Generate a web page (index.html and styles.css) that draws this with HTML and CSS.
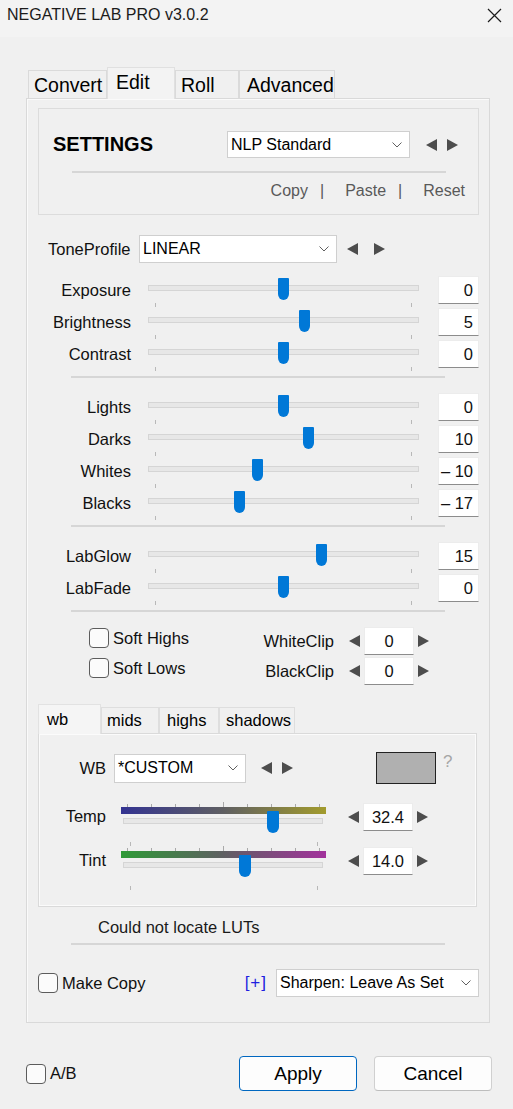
FILE: index.html
```html
<!DOCTYPE html>
<html lang="en">
<head>
<meta charset="utf-8">
<title>Negative Lab Pro</title>
<link rel="stylesheet" href="styles.css">
</head>
<body>
<div class="window">
  <header class="titlebar">
    <span class="title">NEGATIVE LAB PRO v3.0.2</span>
    <svg class="close" width="15" height="15" viewBox="0 0 15 15"><path d="M1 1 L14 14 M14 1 L1 14" stroke="#1b1b1b" stroke-width="1.2" fill="none"/></svg>
  </header>

  <nav class="tabs">
    <span class="tab tab-convert">Convert</span>
    <span class="tab tab-edit active">Edit</span>
    <span class="tab tab-roll">Roll</span>
    <span class="tab tab-adv">Advanced</span>
  </nav>

  <section class="pane">
    <div class="settings">
      <div class="settings-head">
        <h1 class="settings-title">SETTINGS</h1>
        <div class="select select-preset"><span class="select-text">NLP Standard</span><svg class="chev" width="10" height="6" viewBox="0 0 10 6"><path d="M0.5 0.5 L5 5 L9.5 0.5" fill="none" stroke="#606060" stroke-width="1"/></svg></div>
        <i class="arr-l preset-prev"></i><i class="arr-r preset-next"></i>
      </div>
      <hr class="sep sep-settings">
      <div class="links"><span>Copy</span><span class="bar">|</span><span>Paste</span><span class="bar">|</span><span>Reset</span></div>
    </div>

    <div class="tone-row">
      <span class="tone-label">ToneProfile</span>
      <div class="select select-tone"><span class="select-text">LINEAR</span><svg class="chev" width="10" height="6" viewBox="0 0 10 6"><path d="M0.5 0.5 L5 5 L9.5 0.5" fill="none" stroke="#606060" stroke-width="1"/></svg></div>
      <i class="arr-l tone-prev"></i><i class="arr-r tone-next"></i>
    </div>

    <div class="sgroup sgroup-first">
      <div class="srow"><span class="slabel">Exposure</span><div class="slider"><div class="rail"></div><span class="thumb" style="left:130px"></span></div><span class="vbox">0</span></div>
      <div class="srow"><span class="slabel">Brightness</span><div class="slider"><div class="rail"></div><span class="thumb" style="left:151px"></span></div><span class="vbox">5</span></div>
      <div class="srow"><span class="slabel">Contrast</span><div class="slider"><div class="rail"></div><span class="thumb" style="left:130px"></span></div><span class="vbox">0</span></div>
    </div>
    <hr class="sep sep-group">

    <div class="sgroup">
      <div class="srow"><span class="slabel">Lights</span><div class="slider"><div class="rail"></div><span class="thumb" style="left:130px"></span></div><span class="vbox">0</span></div>
      <div class="srow"><span class="slabel">Darks</span><div class="slider"><div class="rail"></div><span class="thumb" style="left:155px"></span></div><span class="vbox">10</span></div>
      <div class="srow"><span class="slabel">Whites</span><div class="slider"><div class="rail"></div><span class="thumb" style="left:104px"></span></div><span class="vbox">– 10</span></div>
      <div class="srow"><span class="slabel">Blacks</span><div class="slider"><div class="rail"></div><span class="thumb" style="left:86px"></span></div><span class="vbox">– 17</span></div>
    </div>
    <hr class="sep sep-group">

    <div class="sgroup">
      <div class="srow"><span class="slabel">LabGlow</span><div class="slider"><div class="rail"></div><span class="thumb" style="left:168px"></span></div><span class="vbox">15</span></div>
      <div class="srow"><span class="slabel">LabFade</span><div class="slider"><div class="rail"></div><span class="thumb" style="left:130px"></span></div><span class="vbox">0</span></div>
    </div>
    <hr class="sep sep-group">

    <div class="clips">
      <div class="checks">
        <label class="check"><span class="cb"></span><span class="check-text">Soft Highs</span></label>
        <label class="check"><span class="cb"></span><span class="check-text">Soft Lows</span></label>
      </div>
      <div class="steppers">
        <div class="stepper"><span class="step-label">WhiteClip</span><i class="arr-l step-prev"></i><span class="nbox">0</span><i class="arr-r step-next"></i></div>
        <div class="stepper"><span class="step-label">BlackClip</span><i class="arr-l step-prev"></i><span class="nbox">0</span><i class="arr-r step-next"></i></div>
      </div>
    </div>

    <nav class="subtabs">
      <span class="subtab subtab-wb active">wb</span>
      <span class="subtab subtab-mids">mids</span>
      <span class="subtab subtab-highs">highs</span>
      <span class="subtab subtab-shadows">shadows</span>
    </nav>
    <div class="subpane">
      <div class="wb-row">
        <span class="wb-label">WB</span>
        <div class="select select-wb"><span class="select-text">*CUSTOM</span><svg class="chev" width="10" height="6" viewBox="0 0 10 6"><path d="M0.5 0.5 L5 5 L9.5 0.5" fill="none" stroke="#606060" stroke-width="1"/></svg></div>
        <i class="arr-l wb-prev"></i><i class="arr-r wb-next"></i>
        <span class="swatch"></span>
        <span class="help">?</span>
      </div>

      <div class="crow crow-first">
        <span class="clabel">Temp</span>
        <div class="cslider">
          <div class="cticks"><i></i><i></i><i></i><i></i><i></i><i></i><i></i><i></i><i></i></div>
          <div class="grad grad-temp"></div>
          <div class="crail"></div>
          <span class="thumb cthumb" style="left:146px"></span>
        </div>
        <div class="stepper wb-stepper"><i class="arr-l"></i><span class="nbox">32.4</span><i class="arr-r step-next"></i></div>
      </div>

      <div class="crow">
        <span class="clabel">Tint</span>
        <div class="cslider">
          <div class="cticks"><i></i><i></i><i></i><i></i><i></i><i></i><i></i><i></i><i></i></div>
          <div class="grad grad-tint"></div>
          <div class="crail"></div>
          <span class="thumb cthumb" style="left:118px"></span>
        </div>
        <div class="stepper wb-stepper"><i class="arr-l"></i><span class="nbox">14.0</span><i class="arr-r step-next"></i></div>
      </div>
    </div>

    <p class="lut">Could not locate LUTs</p>
    <hr class="sep sep-lut">

    <div class="copy-row">
      <label class="check"><span class="cb"></span><span class="check-text">Make Copy</span></label>
      <span class="plus">[+]</span>
      <div class="select select-sharpen"><span class="select-text">Sharpen: Leave As Set</span><svg class="chev" width="10" height="6" viewBox="0 0 10 6"><path d="M0.5 0.5 L5 5 L9.5 0.5" fill="none" stroke="#606060" stroke-width="1"/></svg></div>
    </div>
  </section>

  <footer class="footer">
    <label class="check"><span class="cb"></span><span class="check-text">A/B</span></label>
    <button class="btn btn-primary">Apply</button>
    <button class="btn btn-cancel">Cancel</button>
  </footer>
</div>
</body>
</html>
```

FILE: styles.css
```css
* { box-sizing: border-box; }
html, body { margin: 0; padding: 0; }
body {
  background: #f0f0f0;
  font-family: "Liberation Sans", Arial, sans-serif;
  color: #111;
}
.window {
  width: 513px;
  height: 1109px;
  overflow: hidden;
  background: #f0f0f0;
}

/* title bar */
.titlebar {
  height: 37px;
  background: #f3f3f3;
  display: flex;
  align-items: center;
  padding: 0 11px 7px 7px;
}
.title { font-size: 16px; line-height: 20px; color: #1b1b1b; }
.close { margin-left: auto; display: block; }

/* main tabs */
.tabs {
  display: flex;
  align-items: flex-end;
  height: 31px;
  margin-top: 30px;
  padding-left: 28px;
}
.tab {
  height: 28px;
  border: 1px solid #dadada;
  border-bottom: none;
  background: #f0f0f0;
  font-size: 19.5px;
  line-height: 26px;
  padding-top: 1px;
  color: #000;
  white-space: nowrap;
}
.tab-convert { width: 79px; padding-left: 5px; }
.tab-edit { width: 68px; padding-left: 8px; }
.tab-roll { width: 64px; padding-left: 5px; }
.tab-adv { width: 96px; padding-left: 7px; }
.tab.active {
  height: 32px;
  margin-bottom: -1px;
  position: relative;
  z-index: 2;
  background: #f3f3f3;
  border-color: #e0e0e0;
}

/* pane */
.pane {
  margin-left: 26px;
  width: 464px;
  height: 925px;
  border: 1px solid #d9d9d9;
  box-shadow: inset 1px 1px 0 #fafafa;
}

.sep {
  border: 0;
  height: 2px;
  width: 374px;
  background: #d6d6d6;
  margin: 0 auto;
}

/* settings box */
.settings {
  width: 441px;
  height: 107px;
  margin: 9px 0 0 11px;
  border: 1px solid #dcdcdc;
}
.settings-head {
  display: flex;
  align-items: center;
  height: 27px;
  margin-top: 22px;
  padding-left: 14px;
}
.settings-title {
  margin: 0;
  width: 174px;
  font-size: 20px;
  font-weight: bold;
  line-height: 27px;
  color: #000;
}
.sep-settings { margin-top: 13px; }
.links {
  margin-top: 8px;
  line-height: 20px;
  font-size: 16px;
  color: #595959;
  text-align: right;
  padding-right: 13px;
}
.links .bar { margin: 0 21px 0 12px; }

/* select */
.select {
  display: flex;
  align-items: center;
  background: #fff;
  border: 1px solid #cfcfcf;
  padding-left: 3px;
  font-size: 16px;
  color: #000;
}
.select-text { flex: 1; white-space: nowrap; }
.chev { display: block; margin-right: 7px; flex: none; }
.select-preset { width: 183px; height: 27px; }
.select-tone { width: 198px; height: 28px; margin-left: 6px; }
.select-wb { width: 132px; height: 29px; margin-left: 8px; }
.select-sharpen { width: 203px; height: 28px; margin-left: 9px; }

/* arrows */
.arr-l, .arr-r {
  display: block;
  width: 0;
  height: 0;
  border-style: solid;
  flex: none;
}
.arr-l {
  border-width: 6px 11px 6px 0;
  border-color: transparent #4d4d4d transparent transparent;
}
.arr-r {
  border-width: 6px 0 6px 11px;
  border-color: transparent transparent transparent #4d4d4d;
}
.preset-prev { margin-left: 16px; }
.preset-next { margin-left: 10px; }
.tone-prev { margin-left: 10px; }
.tone-next { margin-left: 16px; }
.wb-prev { margin-left: 15px; }
.wb-next { margin-left: 10px; }

/* tone profile */
.tone-row {
  display: flex;
  align-items: center;
  height: 28px;
  margin-top: 20px;
  padding-left: 21px;
}
.tone-label { width: 85px; font-size: 16.5px; white-space: nowrap; }

/* sliders */
.sgroup { margin-top: 13px; }
.sgroup-first { margin-top: 11px; }
.srow {
  display: grid;
  grid-template-columns: 104px 271px 43px;
  column-gap: 17px;
  height: 32px;
  align-items: center;
}
.slabel {
  text-align: right;
  font-size: 16.5px;
  line-height: 32px;
  color: #111;
}
.slider { position: relative; height: 32px; }
.rail {
  margin-top: 11px;
  height: 6px;
  background: #e7e7e7;
  border: 1px solid #d5d5d5;
}
.slider::before, .slider::after {
  content: "";
  position: absolute;
  top: 29px;
  width: 1px;
  height: 4px;
  background: #b8b8b8;
}
.slider::before { left: 7px; }
.slider::after { right: 7px; }
.thumb {
  position: absolute;
  top: 4px;
  width: 11px;
  height: 22px;
  background: #0078d7;
  border-radius: 1px 1px 50% 50% / 1px 1px 6px 6px;
}
.vbox {
  margin-left: 2px;
  height: 28px;
  background: #fff;
  border: 1px solid #ececec;
  border-bottom-color: #8c8c8c;
  font-size: 16.5px;
  line-height: 26px;
  text-align: right;
  padding-right: 5px;
  white-space: nowrap;
}
.sep-group { margin-top: 6px; }

/* clip + checkboxes */
.clips {
  display: flex;
  margin-top: 15px;
  padding-left: 62px;
}
.checks {
  width: 135px;
  display: flex;
  flex-direction: column;
  gap: 10px;
  padding-top: 1px;
}
.check {
  display: flex;
  align-items: center;
  height: 20px;
  font-size: 16.5px;
  color: #111;
}
.cb {
  width: 20px;
  height: 20px;
  border: 1px solid #5c5c5c;
  border-radius: 4px;
  background: #fbfbfb;
  flex: none;
}
.check-text { margin-left: 4px; white-space: nowrap; }
.steppers { display: flex; flex-direction: column; gap: 2px; }
.stepper { display: flex; align-items: center; height: 28px; }
.step-label { width: 110px; text-align: right; font-size: 16.5px; }
.step-prev { margin-left: 15px; }
.nbox {
  margin-left: 4px;
  width: 50px;
  height: 28px;
  background: #fff;
  border: 1px solid #ececec;
  border-bottom-color: #8c8c8c;
  font-size: 16.5px;
  line-height: 26px;
  text-align: center;
}
.step-next { margin-left: 4px; }

/* sub tabs */
.subtabs {
  display: flex;
  align-items: flex-end;
  height: 29px;
  margin: 19px 0 0 11px;
}
.subtab {
  height: 26px;
  border: 1px solid #dedede;
  border-bottom: none;
  font-size: 16.5px;
  line-height: 25px;
  color: #000;
  background: #f0f0f0;
}
.subtab-wb { width: 63px; padding-left: 8px; }
.subtab-mids { width: 58px; padding-left: 5px; }
.subtab-highs { width: 60px; padding-left: 7px; }
.subtab-shadows { width: 76px; padding-left: 6px; }
.subtab.active {
  height: 30px;
  margin-bottom: -1px;
  line-height: 28px;
  position: relative;
  z-index: 2;
  background: #f5f5f5;
  border-color: #e2e2e2;
}
.subpane {
  margin-left: 11px;
  width: 439px;
  height: 174px;
  border: 1px solid #dadada;
  box-shadow: inset 1px 1px 0 #fbfbfb, inset -1px -1px 0 #fbfbfb;
}
.wb-row {
  display: flex;
  align-items: center;
  height: 32px;
  margin-top: 18px;
}
.wb-label { width: 67px; text-align: right; font-size: 16.5px; }
.swatch {
  margin-left: 83px;
  width: 60px;
  height: 32px;
  background: #b0b0b0;
  border: 1px solid #222;
}
.help {
  align-self: flex-start;
  margin-left: 7px;
  font-size: 17px;
  line-height: 20px;
  color: #a6a6a6;
}

.crow {
  display: flex;
  align-items: flex-start;
  height: 44px;
}
.crow-first { margin-top: 17px; }
.clabel {
  width: 67px;
  text-align: right;
  font-size: 16.5px;
  line-height: 30px;
}
.cslider {
  position: relative;
  width: 205px;
  height: 44px;
  margin-left: 15px;
  padding-top: 6px;
}
.cticks {
  position: absolute;
  top: 0;
  left: 6px;
  right: 6px;
  height: 6px;
  display: flex;
  justify-content: space-between;
  align-items: flex-end;
}
.cticks i { display: block; width: 1px; height: 3px; background: #a9a9a9; }
.cticks i:nth-child(5) { height: 5px; }
.grad { height: 7px; }
.grad-temp { background: linear-gradient(to right, #333391, #5f5f62 50%, #a29b2d); }
.grad-tint { background: linear-gradient(to right, #2f9a37, #5f5f62 50%, #a2329c); }
.crail {
  margin: 4px 0 0 2px;
  width: 200px;
  height: 6px;
  background: #e7e7e7;
  border: 1px solid #d5d5d5;
}
.cslider::before, .cslider::after {
  content: "";
  position: absolute;
  top: 41px;
  width: 1px;
  height: 4px;
  background: #b8b8b8;
}
.cslider::before { left: 9px; }
.cslider::after { left: 196px; }
.cthumb { top: 10px; width: 12px; }
.wb-stepper { margin: 2px 0 0 22px; }
.wb-stepper .nbox { margin-left: 4px; }

/* lut + copy */
.lut {
  margin: 10px 0 0;
  padding-left: 71px;
  font-size: 16.5px;
  line-height: 20px;
  color: #1a1a1a;
}
.sep-lut { margin-top: 6px; }
.copy-row {
  display: flex;
  align-items: center;
  height: 28px;
  margin-top: 24px;
  padding: 0 10px 0 11px;
}
.plus {
  margin-left: auto;
  color: #1f1fe0;
  font-size: 17px;
  letter-spacing: 1px;
}

/* footer */
.footer {
  display: flex;
  align-items: center;
  height: 35px;
  margin-top: 33px;
  padding: 0 21px 0 26px;
}
.btn {
  width: 118px;
  height: 35px;
  border-radius: 4px;
  background: #fdfdfd;
  border: 1px solid #d0d0d0;
  font-family: "Liberation Sans", Arial, sans-serif;
  font-size: 19px;
  color: #000;
  padding: 0;
}
.btn-primary { margin-left: auto; border-color: #0067c0; }
.btn-cancel { margin-left: 17px; border-bottom-color: #bdbdbd; }
```
